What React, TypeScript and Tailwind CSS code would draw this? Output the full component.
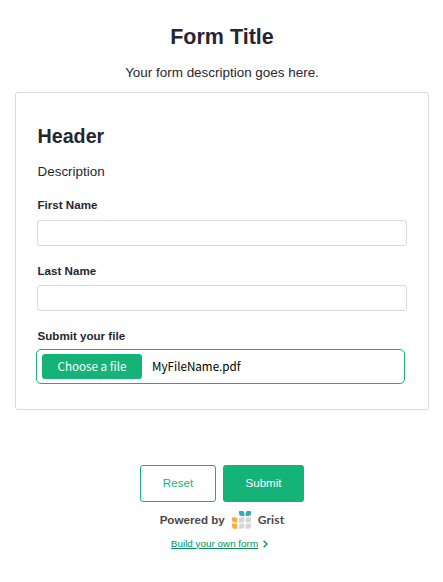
import React from 'react';

function GristLogo() {
  return (
    <svg width="19" height="18" viewBox="0 0 19 18" aria-hidden="true">
      <path d="M7.4 0h2.8Q12.4 0 12.4 2.2v2.4q0 .5-.5.5H9.6Q7 5.1 7 2.6V.4Q7 0 7.4 0Z" fill="#2cb0af" />
      <path d="M18.6 0h-2.8Q13.6 0 13.6 2.2v2.4q0 .5.5.5h2.3Q19 5.1 19 2.6V.4Q19 0 18.6 0Z" fill="#2cb0af" />
      <path d="M.4 6.3h2.8Q5.4 6.3 5.4 8.5v2.4q0 .5-.5.5H2.6Q0 11.4 0 8.9V6.7Q0 6.3.4 6.3Z" fill="#f9ae41" />
      <path d="M.4 12.6h2.8Q5.4 12.6 5.4 14.8v2.4q0 .5-.5.5H2.6Q0 17.7 0 15.2V13Q0 12.6.4 12.6Z" fill="#f9ae41" />
      <path d="M12 6.3H9.2Q7 6.3 7 8.5v2.4q0 .5.5.5h2.3q2.6 0 2.6-2.5V6.7q0-.4-.4-.4Z" fill="#d6d6d6" />
      <path d="M18.6 6.3h-2.8q-2.2 0-2.2 2.2v2.4q0 .5.5.5h2.3Q19 11.4 19 8.9V6.7q0-.4-.4-.4Z" fill="#d6d6d6" />
      <path d="M12 12.6H9.2Q7 12.6 7 14.8v2.4q0 .5.5.5h2.3q2.6 0 2.6-2.5V13q0-.4-.4-.4Z" fill="#d6d6d6" />
      <path d="M18.6 12.6h-2.8q-2.2 0-2.2 2.2v2.4q0 .5.5.5h2.3Q19 17.7 19 15.2V13q0-.4-.4-.4Z" fill="#d6d6d6" />
    </svg>
  );
}

function TextField({ label }: { label: string }) {
  return (
    <label className="block">
      <span className="block h-4 text-[11.6px] leading-4 font-bold">{label}</span>
      <input
        type="text"
        className="mt-[6.6px] -ml-[0.5px] block h-[26px] w-[370px] rounded-[3px] border border-[#d9d9d9] bg-white px-2 outline-none"
      />
    </label>
  );
}

export default function App() {
  return (
    <main className="flex h-[582px] w-[443px] flex-col bg-white pt-[23px] pr-[14px] pl-[15px] font-['Liberation_Sans',Arial,sans-serif] text-[#262633]">
      <h1 className="h-7 text-center text-[21.5px] leading-7 font-bold">Form Title</h1>
      <p className="mt-3 h-5 text-center text-[13.45px] leading-5">Your form description goes here.</p>

      <section className="mt-[9px] h-[318px] rounded-[3px] border border-[#d9d9d9] px-[21.5px] pt-[29px]">
        <h2 className="h-7 text-[19.7px] leading-7 font-bold">Header</h2>
        <p className="mt-3 h-5 text-[13.45px] leading-5">Description</p>
        <div className="mt-[15px] flex flex-col gap-[17px]">
          <TextField label="First Name" />
          <TextField label="Last Name" />
        </div>
        <p className="mt-[16.8px] h-4 text-[11.6px] leading-4 font-bold">Submit your file</p>
        <div className="mt-[4.6px] -ml-[1.5px] flex h-[35px] w-[369px] items-center rounded-[5px] border border-[#16b378] pl-[5px] font-['Noto_Sans_CJK_SC',sans-serif] text-[11.65px]">
          <button className="h-[25px] w-[100px] rounded-[3px] bg-[#16b378] pb-px leading-[23px] text-white">Choose a file</button>
          <span className="ml-2.5 pb-px leading-[23px] text-black">MyFileName.pdf</span>
        </div>
      </section>

      <div className="mt-[55px] flex justify-center gap-[7px] text-[11.6px]">
        <button className="h-[37px] w-[76px] rounded-[3px] border border-[#16b378] pb-0.5 text-[#16b378]">Reset</button>
        <button className="h-[37px] w-[81px] rounded-[3px] bg-[#16b378] pb-0.5 text-white">Submit</button>
      </div>

      <footer className="mt-[8px] flex flex-col items-center">
        <div className="flex h-5 items-center text-[11.6px] font-bold text-[#494949]">
          <span className="mr-[7px] -mt-px">Powered by</span>
          <GristLogo />
          <span className="ml-[7px] font-['Lato',sans-serif] text-[12px] tracking-[0.15px]">Grist</span>
        </div>
        <a className="mt-[6px] mr-[5px] flex h-4 items-center gap-[5px] text-[9.9px] text-[#009058]">
          <span className="underline">Build your own form</span>
          <svg width="5" height="8" viewBox="0 0 5 8" fill="none" stroke="currentColor" strokeWidth="1.3">
            <path d="M.6.7 4 4 .6 7.3" />
          </svg>
        </a>
      </footer>
    </main>
  );
}
